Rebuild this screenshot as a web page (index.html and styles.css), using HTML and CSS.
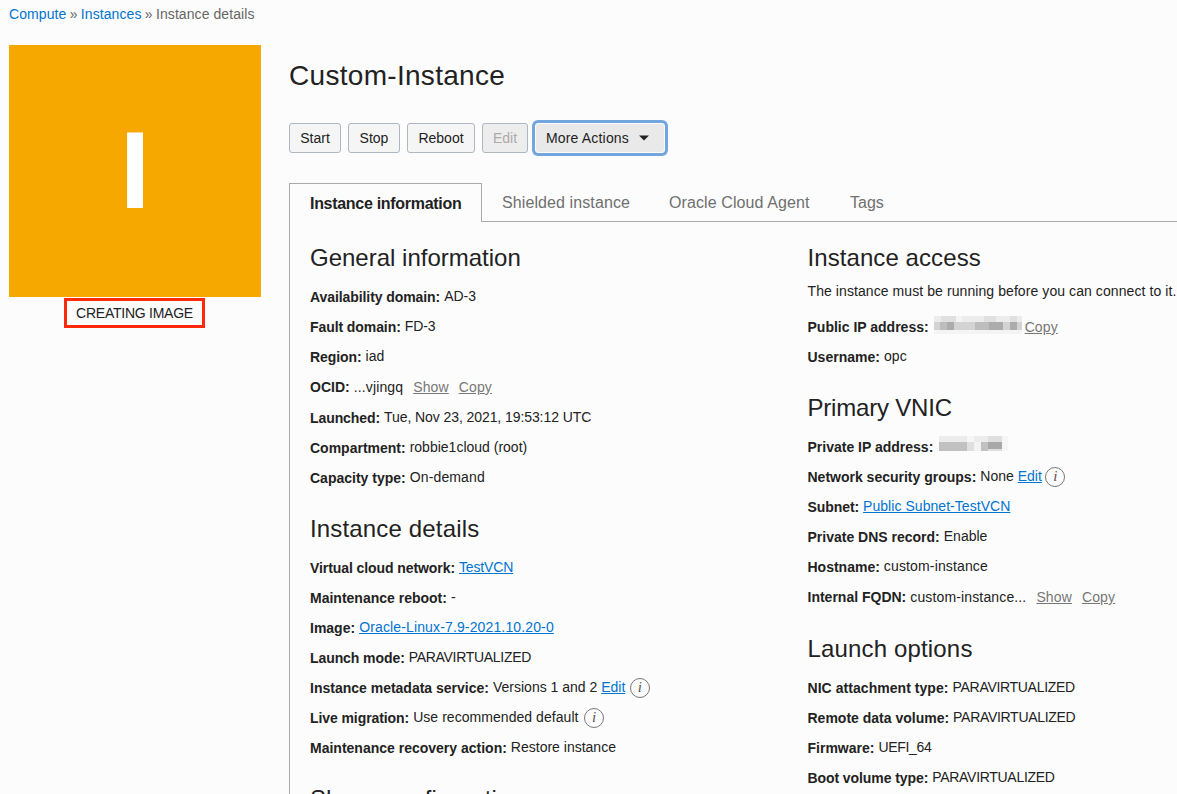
FILE: index.html
```html
<!DOCTYPE html>
<html lang="en">
<head>
<meta charset="utf-8">
<title>Instance details</title>
<link rel="stylesheet" href="styles.css">
</head>
<body>
<nav class="breadcrumb"><a href="#">Compute</a><span class="sep">»</span><a href="#">Instances</a><span class="sep">»</span><span>Instance details</span></nav>
<div class="layout">
  <aside class="side">
    <div class="tile"><span class="tile-letter">I</span></div>
    <div class="status">CREATING IMAGE</div>
  </aside>
  <main class="main">
    <h1 class="title">Custom-Instance</h1>
    <div class="actions">
      <button class="btn w52">Start</button>
      <button class="btn w52">Stop</button>
      <button class="btn w68">Reboot</button>
      <button class="btn w46 disabled" disabled>Edit</button>
      <button class="btn more">More Actions <svg class="caret" width="10" height="6" viewBox="0 0 10 6"><path d="M0 .5h10L5 5.5z" fill="#222"/></svg></button>
    </div>
    <div class="tabs">
      <div class="tab active">Instance information</div>
      <div class="tab shielded">Shielded instance</div>
      <div class="tab agent">Oracle Cloud Agent</div>
      <div class="tab tags">Tags</div>
    </div>
    <div class="panel">
      <div class="col col-left">
        <section class="group">
          <h2>General information</h2>
          <p class="row"><b class="tight">Availability domain:</b> <span>AD-3</span></p>
          <p class="row"><b class="tight">Fault domain:</b> <span class="tight">FD-3</span></p>
          <p class="row"><b class="tight">Region:</b> <span>iad</span></p>
          <p class="row inline ocid"><b>OCID:</b> <span class="loose">...vjingq</span> <a class="muted first" href="#">Show</a> <a class="muted next" href="#">Copy</a></p>
          <p class="row"><b class="tight">Launched:</b> <span class="tight">Tue, Nov 23, 2021, 19:53:12 UTC</span></p>
          <p class="row"><b>Compartment:</b> <span>robbie1cloud (root)</span></p>
          <p class="row"><b>Capacity type:</b> <span class="loose">On-demand</span></p>
        </section>
        <section class="group details">
          <h2 class="wide-title">Instance details</h2>
          <p class="row"><b class="tight">Virtual cloud network:</b> <span class="vcn"><a href="#">TestVCN</a></span></p>
          <p class="row"><b>Maintenance reboot:</b> <span>-</span></p>
          <p class="row"><b>Image:</b> <span class="loose"><a href="#">Oracle-Linux-7.9-2021.10.20-0</a></span></p>
          <p class="row"><b class="tight">Launch mode:</b> <span class="caps">PARAVIRTUALIZED</span></p>
          <p class="row"><b>Instance metadata service:</b> <span>Versions 1 and 2 <a href="#">Edit</a></span> <i class="info roomy">i</i></p>
          <p class="row"><b class="tight">Live migration:</b> <span class="slack">Use recommended default</span> <i class="info wide">i</i></p>
          <p class="row"><b>Maintenance recovery action:</b> <span>Restore instance</span></p>
        </section>
        <section class="group shape">
          <h2>Shape configuration</h2>
        </section>
      </div>
      <div class="col">
        <section class="group access">
          <h2>Instance access</h2>
          <p class="note">The instance must be running before you can connect to it.</p>
          <p class="row inline"><b>Public IP address:</b>
            <svg class="mask public" width="88" height="18" shape-rendering="crispEdges"><path fill="#ececec" d="M0 0h88v18H0z"/><path fill="#e0e0e0" d="M7 0h15v6H7zM50 0h12v6H50zM76 0h7v6h-7z"/><path fill="#f4f4f4" d="M22 0h6v6h-6zM0 14h88v4H0z"/><path fill="#d3d3d3" d="M0 6h88v8H0z"/><path fill="#bdbdbd" d="M6 6h14v8H6zM41 6h14v8H41z"/><path fill="#acacac" d="M13 6h7v8h-7zM55 6h14v8H55zM76 6h7v8h-7z"/></svg>
            <a class="muted copy" href="#">Copy</a></p>
          <p class="row"><b>Username:</b> <span class="loose">opc</span></p>
        </section>
        <section class="group vnic">
          <h2 class="narrow-title">Primary VNIC</h2>
          <p class="row inline"><b>Private IP address:</b>
            <svg class="mask private" width="69" height="15" shape-rendering="crispEdges"><path fill="#ececec" d="M0 0h63v6H0z"/><path fill="#f6f6f6" d="M28 0h7v6h-7zM63 0h6v15h-6z"/><path fill="#dfdfdf" d="M0 6h63v9H0zM49 0h14v6H49z"/><path fill="#c1c1c1" d="M0 6h28v9H0zM42 6h7v9h-7z"/><path fill="#f3f3f3" d="M35 6h7v9h-7z"/><path fill="#a8a8a8" d="M49 6h14v7H49z"/></svg></p>
          <p class="row"><b>Network security groups:</b> <span>None <a href="#">Edit</a></span> <i class="info">i</i></p>
          <p class="row"><b class="tight">Subnet:</b> <span class="slack"><a href="#">Public Subnet-TestVCN</a></span></p>
          <p class="row"><b>Private DNS record:</b> <span>Enable</span></p>
          <p class="row"><b>Hostname:</b> <span class="loose">custom-instance</span></p>
          <p class="row inline"><b>Internal FQDN:</b> <span class="loose">custom-instance...</span> <a class="muted first" href="#">Show</a> <a class="muted next" href="#">Copy</a></p>
        </section>
        <section class="group launch">
          <h2 class="wide-title">Launch options</h2>
          <p class="row"><b class="slack">NIC attachment type:</b> <span class="caps">PARAVIRTUALIZED</span></p>
          <p class="row"><b>Remote data volume:</b> <span class="caps">PARAVIRTUALIZED</span></p>
          <p class="row"><b>Firmware:</b> <span class="caps">UEFI_64</span></p>
          <p class="row"><b class="tight">Boot volume type:</b> <span class="caps">PARAVIRTUALIZED</span></p>
        </section>
      </div>
    </div>
  </main>
</div>
</body>
</html>
```
FILE: styles.css
```css
* { box-sizing: border-box; }
body { margin: 0; height: 794px; overflow: hidden; background: #fcfcfc; color: #222; font: 14px/20px "Liberation Sans", Arial, sans-serif; }
a { color: #0074d1; }
.breadcrumb { height: 45px; padding: 4px 0 0 9px; color: #666; letter-spacing: .08px; display: flex; }
.breadcrumb a { text-decoration: none; }
.sep { margin: 0 3.3px; }
.layout { display: flex; padding-left: 9px; }
.side { width: 252px; flex: none; margin-right: 28px; display: flex; flex-direction: column; align-items: center; }
.tile { width: 252px; height: 252px; background: #f6a700; display: flex; align-items: center; justify-content: center; }
.tile-letter { color: #fff; font-size: 110px; line-height: 110px; font-weight: 700; margin-top: -2px; }
.status { width: 141px; height: 30px; margin: 1px 1px 0 0; border: 3px solid #ff2a0c; line-height: 25px; text-align: center; letter-spacing: -.25px; white-space: nowrap; }
.main { flex: 1; min-width: 0; }
.title { margin: 13px 0 29px; font-size: 28px; line-height: 36px; font-weight: 400; letter-spacing: .3px; }
.actions { display: flex; gap: 7px; }
.btn { height: 30px; padding: 0; border: 1px solid #aeb6be; border-radius: 3px; background: #f5f5f5; color: #222; font: 14px/20px "Liberation Sans", Arial, sans-serif; white-space: nowrap; }
.w52 { width: 52px; }
.w68 { width: 68px; }
.w46 { width: 46px; }
.disabled { background: #ededed; color: #aaa; }
.more { width: 130px; border-color: #fcfcfc; background: #e9e9e9; box-shadow: 0 0 0 3px #73a5df; display: flex; align-items: center; padding-left: 10px; letter-spacing: .17px; }
.caret { margin-left: 10px; }
.tabs { display: flex; height: 39px; margin-top: 30px; font-size: 16px; line-height: 39px; color: #6f6f6f; letter-spacing: .1px; }
.tab { border-bottom: 1px solid #aaa; white-space: nowrap; }
.tab.active { width: 193px; border: 1px solid #aaa; border-bottom: 0; padding-left: 20px; color: #222; font-weight: 700; letter-spacing: -.3px; }
.shielded { width: 167px; padding-left: 20px; }
.agent { width: 181px; padding-left: 20px; }
.tags { flex: 1; padding-left: 20px; letter-spacing: 0; }
.panel { display: flex; border-left: 1px solid #aaa; padding: 21px 0 0 20px; height: 573px; overflow: hidden; }
.col-left { width: 497.5px; flex: none; }
.group { height: 271px; }
.group h2 { margin: 0 0 9px; font-size: 24px; line-height: 30px; font-weight: 400; }
.group .wide-title { letter-spacing: .16px; }
.group .narrow-title { letter-spacing: -.2px; }
.group.access { height: 150px; }
.access h2 { margin-bottom: 8px; letter-spacing: .08px; }
.group.details { height: 270px; }
.group.vnic { height: 241px; }
.group.launch { height: 160px; }
.group.shape { height: 10px; }
.row { margin: 0; height: 30px; padding-top: 5px; white-space: nowrap; display: flex; align-items: flex-start; }
.ocid { height: 31px; }
.row b { margin-right: 4px; }
.row span { margin-top: -1px; }
.row.inline span { margin-top: 0; }
.row .tight { letter-spacing: -.08px; }
.row .loose { letter-spacing: .14px; }
.row .slack { letter-spacing: .05px; }
.row .caps { letter-spacing: -.3px; }
.row .vcn { letter-spacing: -.15px; }
.access .note { margin: 0 0 11px; padding-top: 0; white-space: nowrap; letter-spacing: .08px; }
.muted { color: #777; letter-spacing: .13px; }
.first { margin-left: 10px; }
.next { margin-left: 10px; }
.info { width: 20px; height: 20px; margin: 0 0 0 3.5px; border: 1.3px solid #777; border-radius: 50%; color: #555; font: italic 15px/17px "Liberation Serif", serif; text-align: center; }
.info.roomy { margin-left: 4.5px; }
.info.wide { margin-left: 5.5px; }
.mask { flex: none; }
.public { margin: -1px 3px 0 1px; }
.private { margin: -1px 0 0 2px; }
```
